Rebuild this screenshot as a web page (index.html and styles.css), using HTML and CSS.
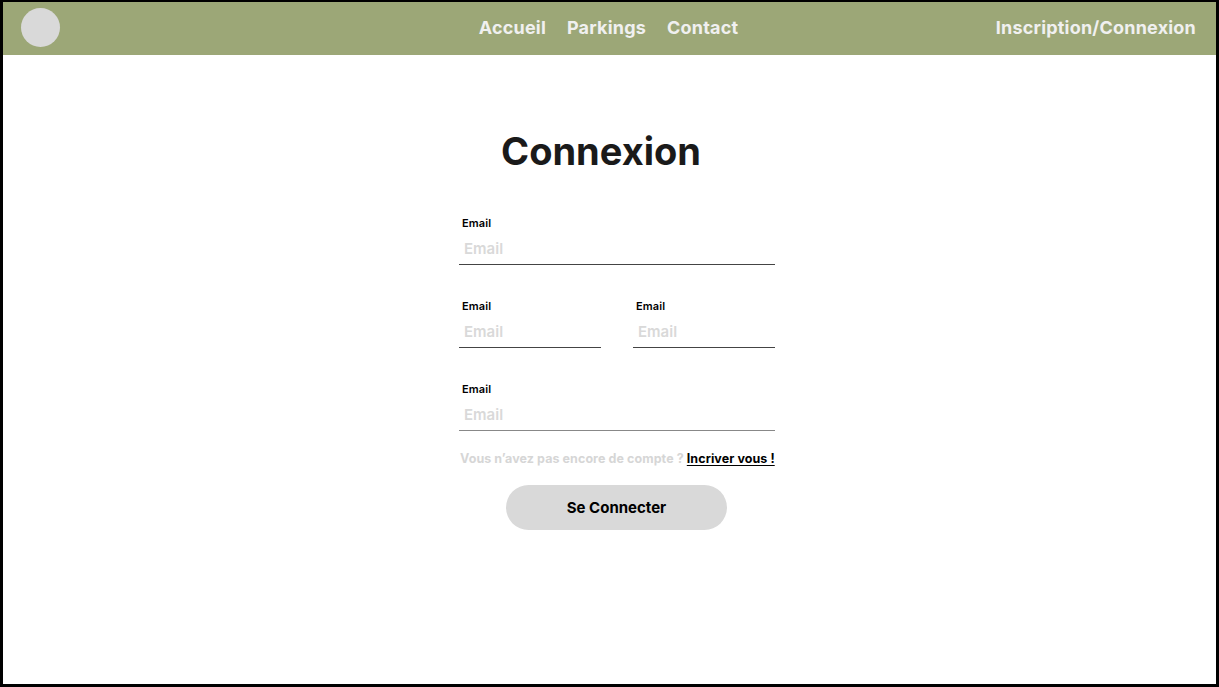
FILE: index.html
```html
<!DOCTYPE html>
<html lang="fr">
<head>
<meta charset="utf-8">
<title>Connexion</title>
<link rel="stylesheet" href="styles.css">
</head>
<body>
<div class="frame">
  <header class="topbar">
    <div class="logo"></div>
    <nav class="nav">
      <a href="#">Accueil</a>
      <a href="#">Parkings</a>
      <a href="#">Contact</a>
    </nav>
    <a class="auth" href="#">Inscription/Connexion</a>
  </header>
  <main class="content">
    <h1 class="title">Connexion</h1>
    <form class="form">
      <div class="field">
        <label class="label">Email</label>
        <div class="input">Email</div>
      </div>
      <div class="row">
        <div class="field">
          <label class="label">Email</label>
          <div class="input">Email</div>
        </div>
        <div class="field">
          <label class="label">Email</label>
          <div class="input">Email</div>
        </div>
      </div>
      <div class="field light">
        <label class="label">Email</label>
        <div class="input">Email</div>
      </div>
      <p class="hint">Vous n’avez pas encore de compte ? <a href="#">Incriver vous !</a></p>
      <button type="button" class="btn">Se Connecter</button>
    </form>
  </main>
</div>
</body>
</html>
```
FILE: styles.css
```css
* { box-sizing: border-box; }
html, body { margin: 0; padding: 0; }
body {
  font-family: Inter, "Noto Sans", "Liberation Sans", sans-serif;
  background: #000;
}
.frame {
  width: 1219px;
  height: 687px;
  border-style: solid;
  border-color: #000;
  border-width: 2px 3px 3px 3px;
  background: #fff;
  display: flex;
  flex-direction: column;
}
.topbar {
  height: 53px;
  background: #9ca777;
  display: grid;
  grid-template-columns: 1fr auto 1fr;
  align-items: center;
  padding: 0 20px 2px 18px;
}
.logo {
  width: 39px;
  height: 39px;
  border-radius: 50%;
  background: #d9d9d9;
}
.nav {
  display: flex;
  gap: 21px;
}
.nav a, .auth {
  color: #f0f0f0;
  text-decoration: none;
  font-weight: 700;
  font-size: 18px;
  line-height: 22px;
  letter-spacing: 0.2px;
}
.auth { justify-self: end; }
.content {
  display: flex;
  flex-direction: column;
  align-items: center;
  padding-top: 72px;
}
.title {
  margin: 0 17px 0 0;
  font-size: 38px;
  line-height: 48px;
  font-weight: 700;
  color: #1a1a1a;
}
.form {
  width: 316px;
  margin: 42px 0 0 15px;
  display: flex;
  flex-direction: column;
}
.row {
  display: grid;
  grid-template-columns: 1fr 1fr;
  gap: 32px;
  margin-top: 35px;
}
.light { margin-top: 35px; }
.field {
  display: flex;
  flex-direction: column;
  border-bottom: 1px solid #444;
}
.field.light { border-bottom-color: #888; }
.label {
  font-size: 11px;
  line-height: 13px;
  font-weight: 600;
  color: #000;
  padding-left: 3px;
  letter-spacing: 0.1px;
}
.input {
  margin-top: 9px;
  padding: 0 0 5px 5px;
  font-size: 15px;
  line-height: 20px;
  font-weight: 600;
  color: #d9d9d9;
}
.hint {
  margin: 20px 0 0;
  font-size: 12.5px;
  line-height: 16px;
  font-weight: 700;
  color: #d6d6d6;
  padding-left: 1px;
  white-space: nowrap;
  letter-spacing: 0.07px;
}
.hint a {
  color: #000;
  text-decoration: underline;
  text-underline-offset: 2px;
}
.btn {
  align-self: flex-start;
  margin: 18px 0 0 47px;
  width: 221px;
  height: 45px;
  border: none;
  border-radius: 23px;
  background: #d9d9d9;
  font-family: inherit;
  font-size: 15px;
  font-weight: 700;
  color: #000;
}
```
